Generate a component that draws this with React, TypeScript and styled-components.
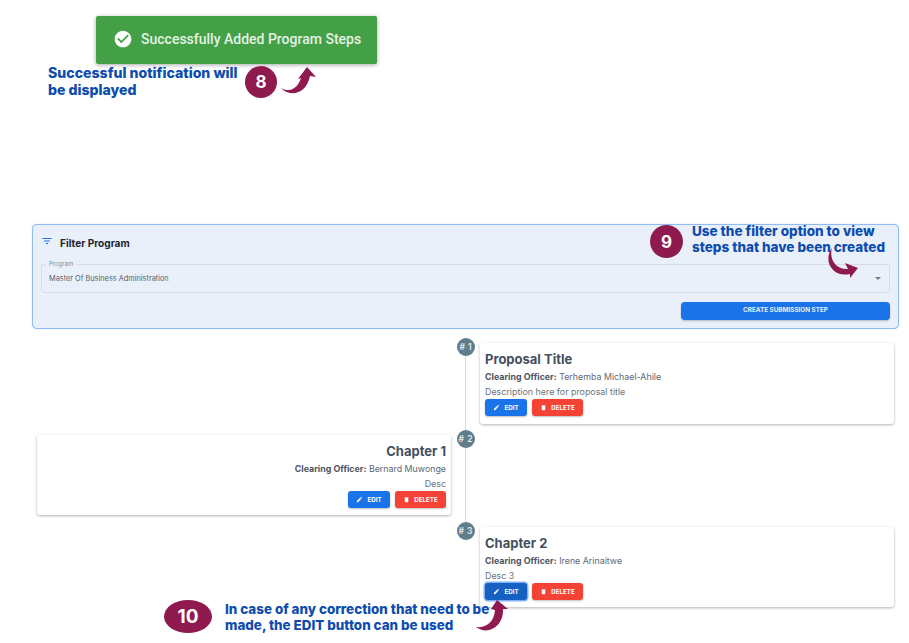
import React from 'react'
import styled, {createGlobalStyle} from 'styled-components'

const GlobalStyle = createGlobalStyle`
  html, body {
    margin: 0;
    padding: 0;
    background: #fff;
  }
  body {
    font-family: 'Inter', 'Liberation Sans', sans-serif;
  }
`

type Side = 'left' | 'right'

type Step = {
  id: number
  title: string
  officer: string
  description: string
  side: Side
  editFocused?: boolean
}

const steps: Step[] = [
  {id: 1, title: 'Proposal Title', officer: 'Terhemba Michael-Ahile', description: 'Description here for proposal title', side: 'right'},
  {id: 2, title: 'Chapter 1', officer: 'Bernard Muwonge', description: 'Desc', side: 'left'},
  {id: 3, title: 'Chapter 2', officer: 'Irene Arinaitwe', description: 'Desc 3', side: 'right', editFocused: true},
]

const CheckCircleIcon = () => (
  <ToastIcon viewBox="0 0 24 24">
    <path fill="#fff" d="M12 2C6.48 2 2 6.48 2 12s4.48 10 10 10 10-4.48 10-10S17.52 2 12 2zm-2 15l-5-5 1.41-1.41L10 14.17l7.59-7.59L19 8l-9 9z" />
  </ToastIcon>
)

const FilterIcon = () => (
  <HeaderIcon viewBox="0 0 24 24">
    <path fill="#1a73e8" d="M10 18h4v-2h-4v2zM3 6v2h18V6H3zm3 7h12v-2H6v2z" />
  </HeaderIcon>
)

const EditIcon = () => (
  <ButtonIcon viewBox="0 0 24 24">
    <path fill="#fff" d="M3 17.25V21h3.75L17.81 9.94l-3.75-3.75L3 17.25zM20.71 7.04c.39-.39.39-1.02 0-1.41l-2.34-2.34c-.39-.39-1.02-.39-1.41 0l-1.83 1.83 3.75 3.75 1.83-1.83z" />
  </ButtonIcon>
)

const DeleteIcon = () => (
  <ButtonIcon viewBox="0 0 24 24">
    <path fill="#fff" d="M6 19c0 1.1.9 2 2 2h8c1.1 0 2-.9 2-2V7H6v12zM19 4h-3.5l-1-1h-5l-1 1H5v2h14V4z" />
  </ButtonIcon>
)

const StepCard = ({step}: {step: Step}) => (
  <Card $side={step.side}>
    <CardTitle>{step.title}</CardTitle>
    <Officer><b>Clearing Officer:</b> {step.officer}</Officer>
    <Description>{step.description}</Description>
    <CardActions $side={step.side}>
      <ActionButton $color="#1a73e8" $wide={false} $focused={step.editFocused}><EditIcon />EDIT</ActionButton>
      <ActionButton $color="#f44336" $wide><DeleteIcon />DELETE</ActionButton>
    </CardActions>
  </Card>
)

export default function App() {
  return (
    <Page>
      <GlobalStyle />

      <Toast>
        <CheckCircleIcon />
        Successfully Added Program Steps
      </Toast>

      <FilterPanel>
        <PanelHeader>
          <FilterIcon />
          <PanelTitle>Filter Program</PanelTitle>
        </PanelHeader>
        <SelectField>
          <SelectLabel>Program</SelectLabel>
          <SelectValue>Master Of Business Administration</SelectValue>
          <Caret />
        </SelectField>
        <PanelFooter>
          <CreateButton>CREATE SUBMISSION STEP</CreateButton>
        </PanelFooter>
      </FilterPanel>

      <Timeline>
        {steps.map((step, index) => (
          <TimelineRow key={step.id}>
            <Cell>{step.side === 'left' && <StepCard step={step} />}</Cell>
            <Rail $last={index === steps.length - 1}>
              <Dot># {step.id}</Dot>
            </Rail>
            <Cell>{step.side === 'right' && <StepCard step={step} />}</Cell>
          </TimelineRow>
        ))}
      </Timeline>

      <NoteEight>Successful notification will<br />be displayed</NoteEight>
      <BadgeEight>8</BadgeEight>
      <ArrowEight viewBox="0 0 48 40">
        <path fill="#8f1a50" d="M6 26 C12 30 22 29 26 16 L23 17 L32 5 L41 15 L35 14 C32 30 17 37 6 26 Z" />
      </ArrowEight>

      <BadgeNine>9</BadgeNine>
      <NoteNine>Use the filter option to view<br />steps that have been created</NoteNine>
      <ArrowNine viewBox="0 0 48 40">
        <path fill="#8f1a50" d="M12 3 C9 13 15 25 28 24 L25 18 L38 23 L30 33 L30 29 C14 33 2 17 12 3 Z" />
      </ArrowNine>

      <BadgeTen>10</BadgeTen>
      <NoteTen>In case of any correction that need to be<br />made, the EDIT button can be used</NoteTen>
      <ArrowTen viewBox="0 0 48 40">
        <path fill="#8f1a50" d="M8 31 C16 32 26 28 27 14 L23 13 L29 4 L40 13 L35 13 C36 30 20 40 8 31 Z" />
      </ArrowTen>
    </Page>
  )
}

const Page = styled.div`
  position: relative;
  width: 909px;
  height: 643px;
  overflow: hidden;
  padding-top: 16px;
  box-sizing: border-box;
`

const Toast = styled.div`
  display: flex;
  align-items: center;
  gap: 8px;
  width: 281px;
  height: 48px;
  margin-left: 96px;
  padding: 0 0 2px 17px;
  box-sizing: border-box;
  background: #43a047;
  border-radius: 2px;
  box-shadow: 0 1px 4px rgba(0, 0, 0, 0.35);
  color: #e4f2e4;
  font-family: 'Roboto', sans-serif;
  font-size: 14px;
  font-weight: 500;
`

const ToastIcon = styled.svg`
  width: 20px;
  height: 20px;
  flex: none;
`

const FilterPanel = styled.section`
  width: 867px;
  height: 105px;
  margin: 160px 0 0 32px;
  padding: 8px;
  box-sizing: border-box;
  background: #e9f0fa;
  border: 1px solid #8fbcf5;
  border-radius: 5px;
  box-shadow: 0 0 1px #8fbcf5;
`

const PanelHeader = styled.div`
  display: flex;
  align-items: center;
  gap: 7px;
  height: 20px;
`

const HeaderIcon = styled.svg`
  width: 12px;
  height: 12px;
  margin-top: -5px;
`

const PanelTitle = styled.h2`
  margin: 0;
  font-size: 10.1px;
  font-weight: 700;
  color: #1d2530;
`

const SelectField = styled.div`
  position: relative;
  display: flex;
  align-items: center;
  justify-content: space-between;
  height: 29px;
  margin-top: 11px;
  padding: 0 8px 0 7px;
  box-sizing: border-box;
  border: 1px solid #d6dbe4;
  border-radius: 3px;
`

const SelectLabel = styled.span`
  position: absolute;
  top: -5px;
  left: 4px;
  padding: 0 3px;
  background: #e9f0fa;
  font-size: 6px;
  color: #808a9a;
`

const SelectValue = styled.span`
  font-size: 7.35px;
  color: #555e6c;
`

const Caret = styled.span`
  width: 0;
  height: 0;
  border-left: 3px solid transparent;
  border-right: 3px solid transparent;
  border-top: 3px solid #757b85;
`

const PanelFooter = styled.div`
  display: flex;
  justify-content: flex-end;
  margin-top: 9px;
`

const CreateButton = styled.button`
  width: 209px;
  height: 18px;
  padding: 0 0 2px;
  border: 0;
  border-radius: 4px;
  background: #1a73e8;
  box-shadow: 0 1px 2px rgba(0, 0, 0, 0.25);
  color: #e8f1fd;
  font-family: inherit;
  font-size: 6.35px;
  font-weight: 700;
`

const Timeline = styled.div`
  display: flex;
  flex-direction: column;
  gap: 12px;
  width: 857px;
  margin: 14px 0 0 37px;
`

const TimelineRow = styled.div`
  display: grid;
  grid-template-columns: 414px 29px 414px;
  height: 80px;

  &:first-child {
    height: 81px;
    margin-bottom: -1px;
  }
`

const Cell = styled.div`
  min-width: 0;
`

const Rail = styled.div<{$last: boolean}>`
  position: relative;
  display: flex;
  justify-content: center;

  &::before {
    content: '';
    position: absolute;
    top: 0;
    bottom: ${({$last}) => ($last ? '100%' : '-12px')};
    left: 14px;
    width: 1px;
    background: #d5d8dc;
  }
`

const Dot = styled.div`
  position: relative;
  display: flex;
  align-items: center;
  justify-content: center;
  width: 18px;
  height: 18px;
  margin-top: -5px;
  border-radius: 50%;
  background: #607d8b;
  color: #e6ebee;
  font-size: 8.5px;
  font-weight: 600;
  word-spacing: 1px;
`

const Card = styled.article<{$side: Side}>`
  display: flex;
  flex-direction: column;
  align-items: ${({$side}) => ($side === 'left' ? 'flex-end' : 'flex-start')};
  height: 100%;
  padding: 7px 5px 0;
  box-sizing: border-box;
  background: #fff;
  border-radius: 3px;
  box-shadow: 0 1px 3px rgba(0, 0, 0, 0.3);
  text-align: ${({$side}) => ($side === 'left' ? 'right' : 'left')};
`

const CardTitle = styled.h3`
  margin: 0;
  font-size: 13px;
  line-height: 18px;
  font-weight: 700;
  color: #454f5e;
`

const Officer = styled.p`
  margin: 3px 0 0;
  font-size: 8.85px;
  line-height: 12px;
  color: #5f6875;

  b {
    font-weight: 700;
    color: #4c5563;
  }
`

const Description = styled.p`
  margin: 3px 0 0;
  font-size: 8.9px;
  line-height: 12px;
  color: #6a7380;
`

const CardActions = styled.div<{$side: Side}>`
  display: flex;
  gap: 5px;
  justify-content: ${({$side}) => ($side === 'left' ? 'flex-end' : 'flex-start')};
  margin-top: 1px;
`

const ActionButton = styled.button<{$color: string; $wide: boolean; $focused?: boolean}>`
  display: flex;
  align-items: center;
  justify-content: center;
  gap: 4px;
  width: ${({$wide}) => ($wide ? '51px' : '42px')};
  height: 17px;
  padding: 0 0 1px;
  border: 0;
  border-radius: 3px;
  background: ${({$color, $focused}) => ($focused ? '#1560c0' : $color)};
  box-shadow: ${({$focused}) => ($focused ? '0 0 0 1.5px #7fb2f2' : '0 1px 2px rgba(0, 0, 0, 0.25)')};
  color: #fff;
  font-family: inherit;
  font-size: 6.2px;
  font-weight: 700;
`

const ButtonIcon = styled.svg`
  width: 7px;
  height: 7px;
`

const Note = styled.p`
  position: absolute;
  margin: 0;
  color: #0d4cae;
  font-family: 'Inter', sans-serif;
  font-weight: 800;
  white-space: nowrap;
`

const NoteEight = styled(Note)`
  left: 48px;
  top: 64px;
  font-size: 14.1px;
  line-height: 17px;
`

const NoteNine = styled(Note)`
  left: 692px;
  top: 223px;
  font-size: 13.5px;
  line-height: 16px;
`

const NoteTen = styled(Note)`
  left: 225px;
  top: 601px;
  font-size: 13.4px;
  line-height: 16px;
`

const Badge = styled.div`
  position: absolute;
  display: flex;
  align-items: center;
  justify-content: center;
  border-radius: 50%;
  background: #8f1a50;
  color: #fff;
  font-weight: 700;
`

const BadgeEight = styled(Badge)`
  left: 245px;
  top: 66px;
  width: 32px;
  height: 32px;
  font-size: 17px;
`

const BadgeNine = styled(Badge)`
  left: 650px;
  top: 225px;
  width: 33px;
  height: 33px;
  font-size: 17px;
`

const BadgeTen = styled(Badge)`
  left: 164px;
  top: 600px;
  width: 48px;
  height: 33px;
  font-size: 19px;
`

const Arrow = styled.svg`
  position: absolute;
  width: 48px;
  height: 40px;
`

const ArrowEight = styled(Arrow)`
  left: 275px;
  top: 62px;
`

const ArrowNine = styled(Arrow)`
  left: 820px;
  top: 245px;
`

const ArrowTen = styled(Arrow)`
  left: 468px;
  top: 596px;
`
